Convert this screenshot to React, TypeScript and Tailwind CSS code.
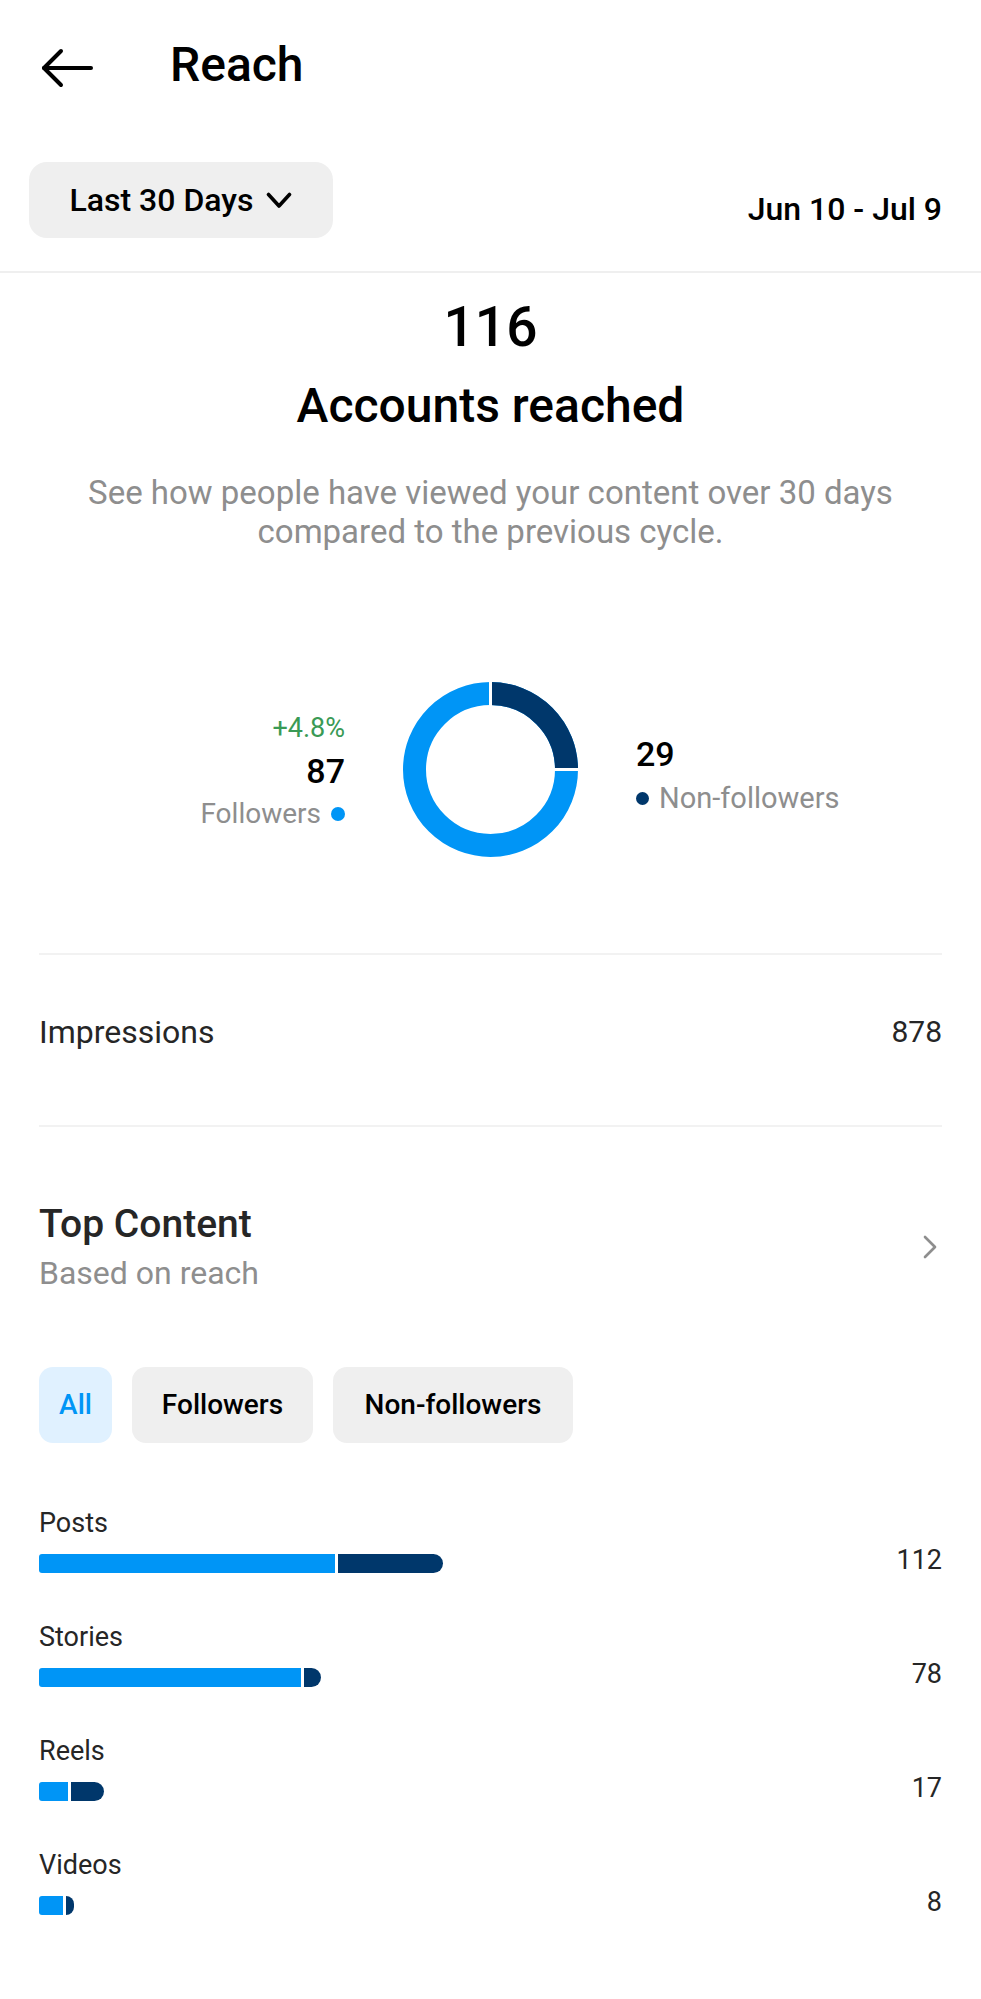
import { ChevronRight } from "lucide-react";

const bars = [
  { label: "Posts", value: 112, light: 296, dark: 105 },
  { label: "Stories", value: 78, light: 262, dark: 17 },
  { label: "Reels", value: 17, light: 29, dark: 33 },
  { label: "Videos", value: 8, light: 24, dark: 8 },
];

function BackArrow() {
  return (
    <svg width="52" height="40" viewBox="0 0 52 40" fill="none" stroke="#000" strokeWidth="4" strokeLinecap="round" strokeLinejoin="round">
      <path d="M50 20H3" />
      <path d="M20 3L3 20l17 17" />
    </svg>
  );
}

function DownCaret() {
  return (
    <svg width="26" height="17" viewBox="0 0 26 17" fill="none" stroke="#000" strokeWidth="3.6" strokeLinecap="round" strokeLinejoin="round">
      <path d="M2.5 2.5L13 14 23.5 2.5" />
    </svg>
  );
}

function Donut() {
  const c = 87.5;
  const r = 76;
  return (
    <svg width="175" height="175" viewBox="0 0 175 175">
      <circle cx={c} cy={c} r={r} fill="none" stroke="#0095f6" strokeWidth="23" />
      <path d={`M${c} ${c - r} A${r} ${r} 0 0 1 ${c + r} ${c}`} fill="none" stroke="#00376b" strokeWidth="23" />
      <line x1={c} y1={c - r - 13} x2={c} y2={c - r + 13} stroke="#fff" strokeWidth="3" />
      <line x1={c + r - 13} y1={c} x2={c + r + 13} y2={c} stroke="#fff" strokeWidth="3" />
    </svg>
  );
}

export default function App() {
  return (
    <div className="w-[981px] min-h-[1999px] bg-white text-black font-['Roboto','Noto_Sans',sans-serif]">
      {/* header */}
      <div className="flex items-center pt-[37px] pl-[41px]">
        <div className="mt-[6px]">
          <BackArrow />
        </div>
        <h1 className="ml-[77px] text-[48px] leading-[56px] font-medium">Reach</h1>
      </div>

      {/* date range */}
      <div className="flex items-center justify-between mt-[69px] pl-[29px] pr-[39px]">
        <button className="flex items-center justify-center gap-[13px] w-[304px] h-[76px] rounded-[18px] bg-[#efefef] text-[32px] font-medium">
          <span>Last 30 Days</span>
          <DownCaret />
        </button>
        <span className="pt-[17px] text-[32px] font-medium">Jun 10 - Jul 9</span>
      </div>

      <div className="mt-[33px] h-[2px] bg-[#efefef]" />

      {/* summary */}
      <div className="flex flex-col items-center text-center">
        <div className="mt-[22px] text-[55px] leading-[64px] font-medium">116</div>
        <div className="mt-[19px] text-[48px] leading-[56px] font-medium">Accounts reached</div>
        <p className="mt-[39px] w-[900px] text-[33px] leading-[39px] text-[#8e8e8e]">
          See how people have viewed your content over 30 days compared to the previous cycle.
        </p>
      </div>

      {/* donut */}
      <div className="mt-[131px] grid grid-cols-[1fr_175px_1fr] gap-x-[58px] items-start">
        <div className="mt-[31px] flex flex-col items-end text-right">
          <span className="text-[27px] leading-[30px] text-[#3a9a55]">+4.8%</span>
          <span className="mt-[9px] text-[34px] leading-[38px] font-medium">87</span>
          <span className="mt-[7px] flex items-center gap-[10px] text-[28px] leading-[34px] text-[#8e8e8e]">
            Followers
            <span className="w-[14px] h-[14px] rounded-full bg-[#0095f6]" />
          </span>
        </div>
        <Donut />
        <div className="mt-[53px] flex flex-col items-start">
          <span className="text-[34px] leading-[38px] font-medium">29</span>
          <span className="mt-[8px] flex items-center gap-[10px] text-[29px] leading-[34px] text-[#8e8e8e]">
            <span className="w-[13px] h-[13px] rounded-full bg-[#00376b]" />
            Non-followers
          </span>
        </div>
      </div>

      <div className="px-[39px]">
        <div className="mt-[96px] h-[2px] bg-[#f2f2f2]" />

        {/* impressions */}
        <div className="mt-[57px] flex items-center justify-between text-[32px] leading-[40px] text-[#262626]">
          <span>Impressions</span>
          <span className="text-[30px]">878</span>
        </div>

        <div className="mt-[73px] h-[2px] bg-[#f2f2f2]" />

        {/* top content */}
        <div className="mt-[75px] flex items-center justify-between">
          <div className="flex flex-col">
            <span className="text-[39px] leading-[44px] font-medium text-[#262626]">Top Content</span>
            <span className="mt-[8px] text-[32px] leading-[38px] text-[#8e8e8e]">Based on reach</span>
          </div>
          <ChevronRight className="w-[40px] h-[40px] -mr-[8px] text-[#8e8e8e]" strokeWidth={1.6} />
        </div>

        {/* filter chips */}
        <div className="mt-[75px] flex gap-[20px]">
          <button className="w-[73px] h-[76px] rounded-[14px] bg-[#e0f1ff] text-[28px] font-medium text-[#0095f6]">All</button>
          <button className="w-[181px] h-[76px] rounded-[14px] bg-[#efefef] text-[28px] font-medium">Followers</button>
          <button className="w-[240px] h-[76px] rounded-[14px] bg-[#efefef] text-[28px] font-medium">Non-followers</button>
        </div>

        {/* bars */}
        <div className="mt-[64px] flex flex-col gap-[48px]">
          {bars.map((b) => (
            <div key={b.label} className="flex flex-col">
              <span className="text-[27px] leading-[32px] text-[#262626]">{b.label}</span>
              <div className="mt-[15px] flex items-center justify-between h-[19px]">
                <div className="flex h-[19px] gap-[3px]">
                  <div className="h-full rounded-l-[3px] bg-[#0095f6]" style={{ width: b.light }} />
                  <div className="h-full rounded-r-full bg-[#00376b]" style={{ width: b.dark }} />
                </div>
                <span className="pb-[6px] text-[27px] leading-[19px] text-[#262626]">{b.value}</span>
              </div>
            </div>
          ))}
        </div>
      </div>
    </div>
  );
}
